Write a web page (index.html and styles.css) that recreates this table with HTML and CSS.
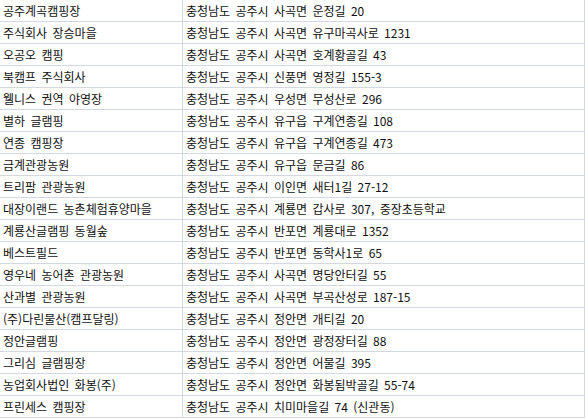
FILE: index.html
```html
<!DOCTYPE html>
<html lang="ko">
<head>
<meta charset="utf-8">
<link rel="stylesheet" href="styles.css">
</head>
<body>
<table class="sheet">
<tbody>
<tr><td class="name">공주계곡캠핑장</td><td class="addr">충청남도 공주시 사곡면 운정길 20</td></tr>
<tr><td class="name">주식회사 장승마을</td><td class="addr">충청남도 공주시 사곡면 유구마곡사로 1231</td></tr>
<tr><td class="name">오공오 캠핑</td><td class="addr">충청남도 공주시 사곡면 호계황골길 43</td></tr>
<tr><td class="name">북캠프 주식회사</td><td class="addr">충청남도 공주시 신풍면 영정길 155-3</td></tr>
<tr><td class="name">웰니스 권역 야영장</td><td class="addr">충청남도 공주시 우성면 무성산로 296</td></tr>
<tr><td class="name">별하 글램핑</td><td class="addr">충청남도 공주시 유구읍 구계연종길 108</td></tr>
<tr><td class="name">연종 캠핑장</td><td class="addr">충청남도 공주시 유구읍 구계연종길 473</td></tr>
<tr><td class="name">금계관광농원</td><td class="addr">충청남도 공주시 유구읍 문금길 86</td></tr>
<tr><td class="name">트리팜 관광농원</td><td class="addr">충청남도 공주시 이인면 새터1길 27-12</td></tr>
<tr><td class="name">대장이랜드 농촌체험휴양마을</td><td class="addr">충청남도 공주시 계룡면 갑사로 307, 중장초등학교</td></tr>
<tr><td class="name">계룡산글램핑 동월숲</td><td class="addr">충청남도 공주시 반포면 계룡대로 1352</td></tr>
<tr><td class="name">베스트필드</td><td class="addr">충청남도 공주시 반포면 동학사1로 65</td></tr>
<tr><td class="name">영우네 농어촌 관광농원</td><td class="addr">충청남도 공주시 사곡면 명당안터길 55</td></tr>
<tr><td class="name">산과별 관광농원</td><td class="addr">충청남도 공주시 사곡면 부곡산성로 187-15</td></tr>
<tr><td class="name">(주)다린물산(캠프달링)</td><td class="addr">충청남도 공주시 정안면 개티길 20</td></tr>
<tr><td class="name">정안글램핑</td><td class="addr">충청남도 공주시 정안면 광정장터길 88</td></tr>
<tr><td class="name">그리심 글램핑장</td><td class="addr">충청남도 공주시 정안면 어물길 395</td></tr>
<tr><td class="name">농업회사법인 화봉(주)</td><td class="addr">충청남도 공주시 정안면 화봉됨박골길 55-74</td></tr>
<tr><td class="name">프린세스 캠핑장</td><td class="addr">충청남도 공주시 치미마을길 74 (신관동)</td></tr>
</tbody>
</table>
</body>
</html>
```

FILE: styles.css
```css
html, body {
  margin: 0;
  padding: 0;
  background: #ffffff;
}
.sheet {
  border-collapse: separate;
  border-spacing: 0;
  font-family: "Noto Sans CJK KR", "Noto Sans", sans-serif;
  font-size: 12px;
  word-spacing: 2px;
  color: #111111;
  table-layout: fixed;
}
.sheet td {
  height: 22px;
  padding: 0 0 0 3px;
  border-bottom: 1px solid #d4d8e0;
  border-right: 1px solid #d4d8e0;
  white-space: nowrap;
  overflow: hidden;
  vertical-align: middle;
  line-height: 21px;
  box-sizing: border-box;
}
.name {
  width: 183px;
}
.addr {
  width: 402px;
}
```
